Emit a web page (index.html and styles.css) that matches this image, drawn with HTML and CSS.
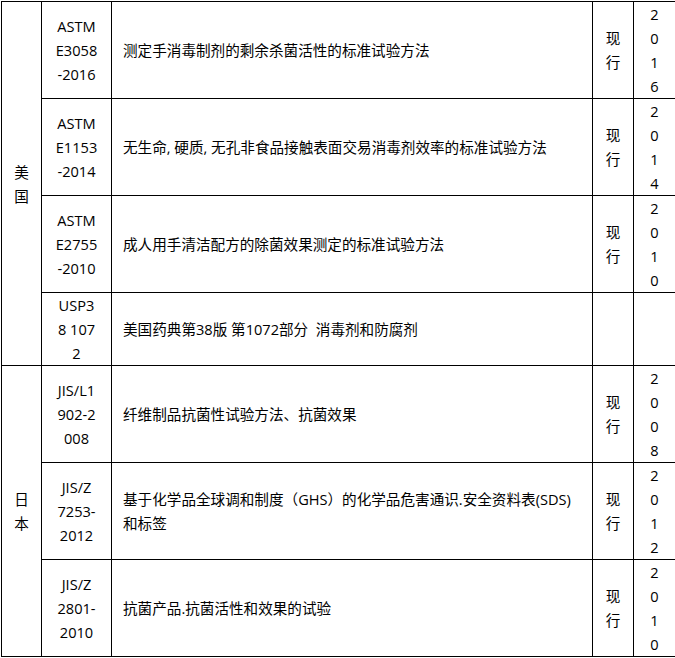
FILE: index.html
```html
<!DOCTYPE html>
<html lang="zh-CN">
<head>
<meta charset="utf-8">
<title>标准列表</title>
<link rel="stylesheet" href="styles.css">
</head>
<body>
<div class="page">
<table class="std-table">
  <colgroup>
    <col class="c-region">
    <col class="c-code">
    <col class="c-title">
    <col class="c-status">
    <col class="c-year">
  </colgroup>
  <tbody>
    <tr>
      <td class="region" rowspan="4"><div class="stack">美国</div></td>
      <td class="code">ASTM<br>E3058<br>-2016</td>
      <td class="title">测定手消毒制剂的剩余杀菌活性的标准试验方法</td>
      <td class="status"><div class="stack">现行</div></td>
      <td class="year"><div class="stack">2016</div></td>
    </tr>
    <tr>
      <td class="code">ASTM<br>E1153<br>-2014</td>
      <td class="title">无生命, 硬质, 无孔非食品接触表面交易消毒剂效率的标准试验方法</td>
      <td class="status"><div class="stack">现行</div></td>
      <td class="year"><div class="stack">2014</div></td>
    </tr>
    <tr>
      <td class="code">ASTM<br>E2755<br>-2010</td>
      <td class="title">成人用手清洁配方的除菌效果测定的标准试验方法</td>
      <td class="status"><div class="stack">现行</div></td>
      <td class="year"><div class="stack">2010</div></td>
    </tr>
    <tr>
      <td class="code">USP3<br>8 107<br>2</td>
      <td class="title">美国药典第38版 第1072部分&nbsp; 消毒剂和防腐剂</td>
      <td class="status"></td>
      <td class="year"></td>
    </tr>
    <tr>
      <td class="region" rowspan="3"><div class="stack">日本</div></td>
      <td class="code">JIS/L1<br>902-2<br>008</td>
      <td class="title">纤维制品抗菌性试验方法、抗菌效果</td>
      <td class="status"><div class="stack">现行</div></td>
      <td class="year"><div class="stack">2008</div></td>
    </tr>
    <tr>
      <td class="code">JIS/Z<br>7253-<br>2012</td>
      <td class="title">基于化学品全球调和制度（GHS）的化学品危害通识.安全资料表(SDS)<br>和标签</td>
      <td class="status"><div class="stack">现行</div></td>
      <td class="year"><div class="stack">2012</div></td>
    </tr>
    <tr>
      <td class="code">JIS/Z<br>2801-<br>2010</td>
      <td class="title">抗菌产品.抗菌活性和效果的试验</td>
      <td class="status"><div class="stack">现行</div></td>
      <td class="year"><div class="stack">2010</div></td>
    </tr>
  </tbody>
</table>
</div>
</body>
</html>
```

FILE: styles.css
```css
html, body {
  margin: 0;
  padding: 0;
  background: #ffffff;
}

.page {
  padding: 1px 0 0 1px;
}

.std-table {
  border-collapse: collapse;
  table-layout: fixed;
  width: 674px;
  font-family: "Open Sans", "Noto Sans CJK SC", sans-serif;
  font-size: 14.6px;
  line-height: 24px;
  color: #000000;
}

.c-region { width: 40px; }
.c-code { width: 70px; }
.c-title { width: 481px; }
.c-status { width: 41px; }
.c-year { width: 42px; }

.std-table td {
  border: 1px solid #000000;
  padding: 0;
  vertical-align: middle;
}

.region,
.code,
.status,
.year {
  text-align: center;
}

.title {
  padding: 0 8px 0 11px !important;
  text-align: left;
}

.stack {
  width: 1em;
  margin: 0 auto;
  word-break: break-all;
}
```
